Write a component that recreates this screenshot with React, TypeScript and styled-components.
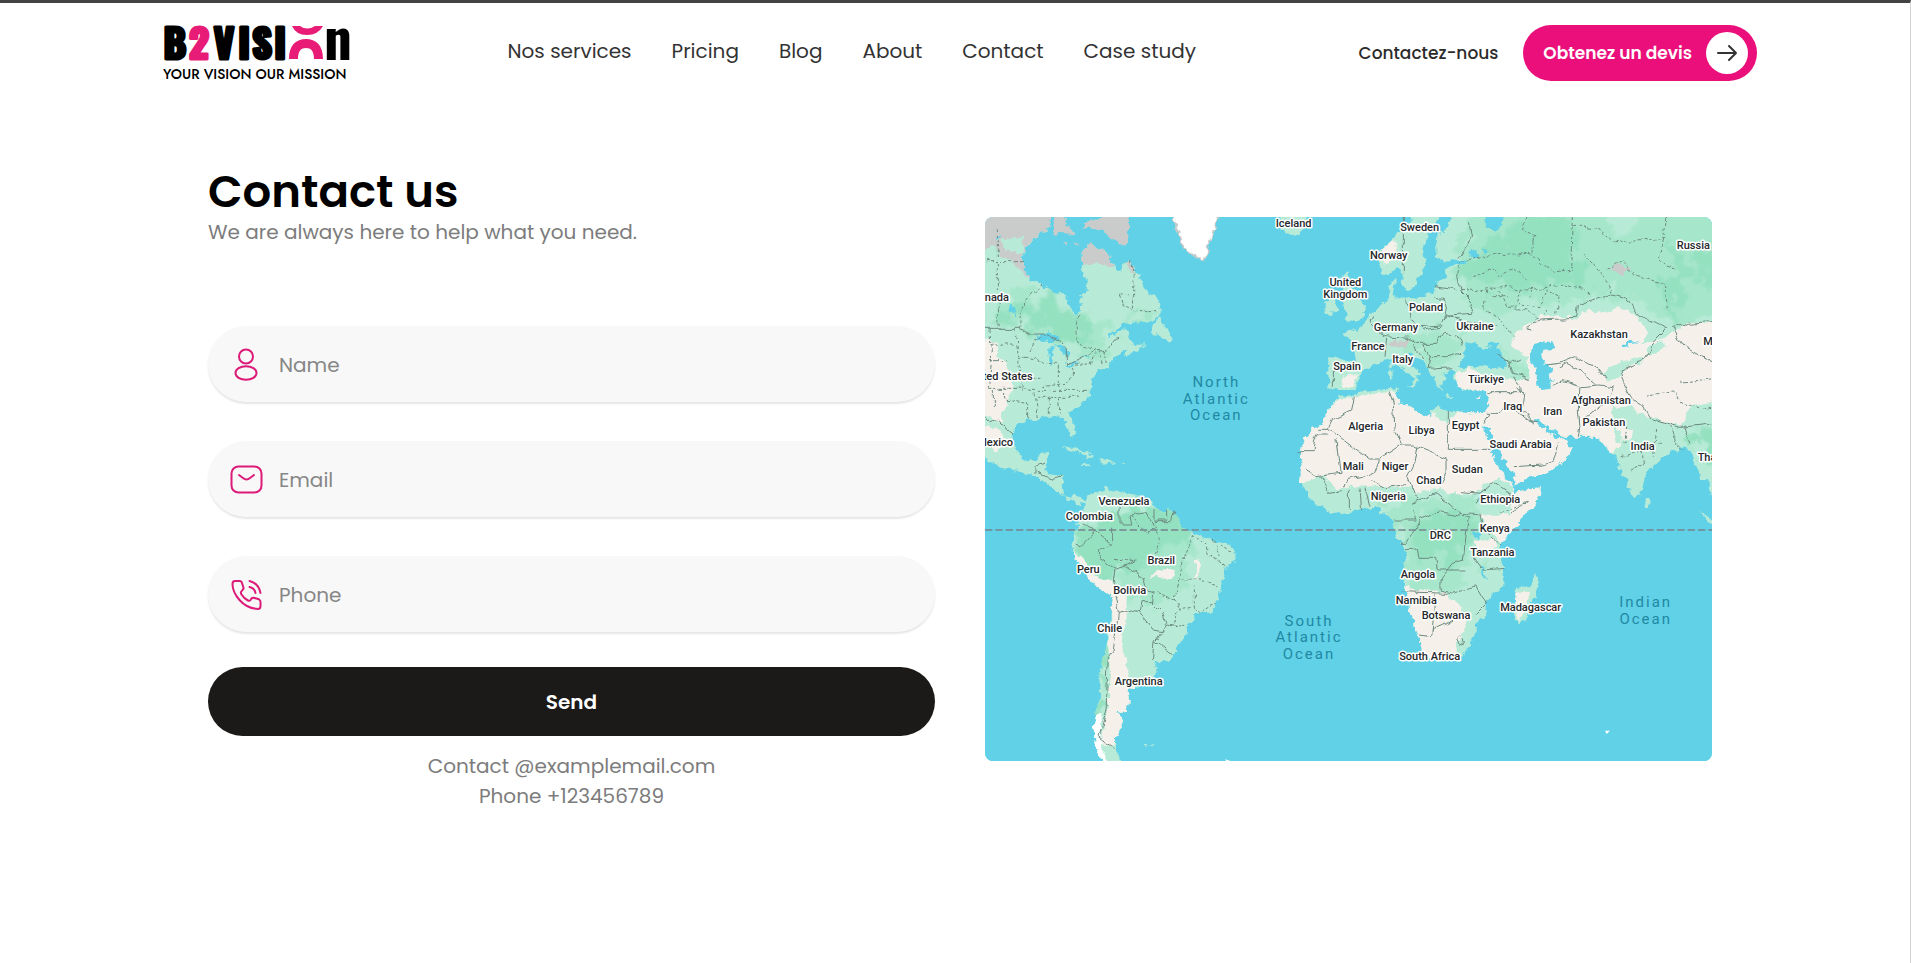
import React from "react";
import styled, { createGlobalStyle } from "styled-components";

const PINK = "#ea0f7b";

const GlobalStyle = createGlobalStyle`
  *, *::before, *::after { box-sizing: border-box; }
  body {
    margin: 0;
    background: #fff;
    color: #333;
    font-family: Poppins, Inter, "Liberation Sans", sans-serif;
  }
`;

const Page = styled.div`
  min-height: 100vh;
  border-top: 3px solid #434343;
  border-right: 1px solid #d4d4d4;
  padding-left: 10px;
`;

const Header = styled.header`
  display: flex;
  align-items: center;
  justify-content: space-between;
  gap: 24px;
  max-width: 1594px;
  margin: 0 auto;
  padding: 22px 0;
`;

const LogoLink = styled.a`
  display: block;
  flex: none;
  height: 56px;
`;

const Nav = styled.nav`
  display: flex;
  gap: 40px;
  margin-right: 6px;
`;

const NavLink = styled.a`
  color: #333;
  font-size: 20px;
  line-height: 30px;
  text-decoration: none;
  white-space: nowrap;
  padding-bottom: 4px;
`;

const Actions = styled.div`
  display: flex;
  align-items: center;
  gap: 25px;
`;

const ContactLink = styled.a`
  color: #2b2b2b;
  font-size: 17px;
  font-weight: 500;
  text-decoration: none;
  white-space: nowrap;
`;

const QuoteButton = styled.button`
  display: flex;
  align-items: center;
  gap: 14px;
  height: 56px;
  padding: 0 9px 0 20px;
  border: 0;
  border-radius: 28px;
  background: ${PINK};
  color: #fff;
  font-family: inherit;
  font-size: 17px;
  font-weight: 600;
  white-space: nowrap;
  cursor: pointer;
`;

const ArrowDisc = styled.span`
  display: grid;
  place-items: center;
  width: 42px;
  height: 42px;
  border-radius: 50%;
  background: #fff;
`;

const Main = styled.main`
  display: grid;
  grid-template-columns: 1fr 1fr;
  align-items: center;
  gap: 50px;
  max-width: 1504px;
  margin: 0 auto;
  padding: 60px 0;
`;

const ContactPanel = styled.section`
  padding-bottom: 4px;
`;

const Title = styled.h1`
  margin: 0;
  color: #000;
  font-size: 45px;
  line-height: 58px;
  font-weight: 600;
`;

const Subtitle = styled.p`
  margin: 0 0 83px;
  color: #7c7c7c;
  font-size: 20px;
  line-height: 22px;
`;

const Form = styled.form`
  display: flex;
  flex-direction: column;
  gap: 39px;
`;

const Field = styled.label`
  display: flex;
  align-items: center;
  gap: 15px;
  height: 76px;
  padding: 2px 22px 0;
  border-radius: 38px;
  background: #f8f8f8;
  box-shadow: 0 2px 2px rgba(0, 0, 0, 0.1);
`;

const Input = styled.input`
  flex: 1;
  min-width: 0;
  padding: 0;
  border: 0;
  outline: 0;
  background: none;
  color: #333;
  font-family: inherit;
  font-size: 20px;
  line-height: 30px;
  &::placeholder { color: #868686; opacity: 1; }
`;

const SendButton = styled.button`
  height: 69px;
  margin-top: -4px;
  border: 0;
  border-radius: 35px;
  background: #1b1a18;
  color: #fff;
  font-family: inherit;
  font-size: 20px;
  font-weight: 600;
  cursor: pointer;
`;

const Details = styled.address`
  margin-top: 15px;
  color: #7c7c7c;
  font-size: 20px;
  line-height: 30px;
  font-style: normal;
  text-align: center;
`;

const MapFrame = styled.svg`
  display: block;
  width: 100%;
  height: auto;
  border-radius: 8px;
  background: #60d1e6;
`;

const CountryLabel = styled.text`
  font-family: Roboto, "Liberation Sans", sans-serif;
  font-size: 33px;
  font-weight: 500;
  fill: #25282b;
  stroke: #fff;
  stroke-width: 9px;
  stroke-linejoin: round;
  paint-order: stroke;
`;

const OceanLabel = styled.text`
  font-family: Roboto, "Liberation Sans", sans-serif;
  font-size: 45px;
  letter-spacing: 6px;
  fill: #2289a5;
`;

const LogoLetters = styled.text`
  font-family: Oswald, "Liberation Sans", sans-serif;
  font-weight: 700;
  text-anchor: middle;
  stroke-linejoin: round;
`;

const LogoTagline = styled.text`
  font-family: Jost, Lato, sans-serif;
  font-size: 14px;
  font-weight: 500;
`;

function Logo() {
  return (
    <svg width="188" height="56" viewBox="0 0 188 56" role="img" aria-label="B2Vision">
      <LogoLetters fontSize="39" y="34" stroke="#000" strokeWidth="3">
        <tspan x="12">B</tspan>
        <tspan x="36" fill="#e81c76" stroke="#e81c76">2</tspan>
        <tspan x="61">V</tspan>
        <tspan x="81">I</tspan>
        <tspan x="99">S</tspan>
        <tspan x="117">I</tspan>
      </LogoLetters>
      <path d="M129 1H137Q144 6 152 1H160Q155 10 144 10T129 1Z" fill="#e81c76" />
      <path d="M126 34C126 20 133 14 143 14S160 20 160 34H151C151 26 148 23 143 23S135 26 135 34Z" fill="#e81c76" />
      <LogoLetters fontSize="55" x="175" y="35">n</LogoLetters>
      <LogoTagline x="0" y="54">YOUR VISION OUR MISSION</LogoTagline>
    </svg>
  );
}

function ArrowIcon() {
  return (
    <svg width="22" height="18" viewBox="0 0 22 18" fill="none" stroke="#333" strokeWidth="2" strokeLinecap="round" strokeLinejoin="round">
      <path d="M2 9H20M13 2L20 9L13 16" />
    </svg>
  );
}

const iconProps = {
  width: 34,
  height: 34,
  viewBox: "0 0 34 34",
  fill: "none",
  stroke: "#dc1a78",
  strokeWidth: 2,
  strokeLinecap: "round" as const,
  strokeLinejoin: "round" as const,
};

const UserIcon = () => (
  <svg {...iconProps}>
    <circle cx="16" cy="8.500" r="7" />
    <ellipse cx="16" cy="25" rx="10.500" ry="6.800" />
  </svg>
);

const MailIcon = () => (
  <svg {...iconProps}>
    <rect x="1.500" y="3.500" width="30" height="26" rx="7" />
    <path d="M9 12L13 15Q16.500 18 20 15L24 12" />
  </svg>
);

const PhoneIcon = () => (
  <svg {...iconProps}>
    <path d="M5 3H9.500Q11.500 3 12 5L13.300 9Q14 11 12.500 12L11 14Q10.500 15 11.500 16.500Q14 20.500 18 22.500Q19.500 23.300 20.500 22L21.500 20.500Q22.500 19.500 24.500 20L29 21.300Q30.500 22 30.500 24V28Q30.500 31 28 31Q17 30.500 9.500 22Q2.500 14 2.500 6Q2.500 3 5 3Z" />
    <path d="M19.500 3Q28.500 5 30.500 15M19.500 9Q24.500 10 25.500 15" />
  </svg>
);

const MAINLAND =
  "M-30 -30H212L210 55L190 62L160 85L135 120L128 150L130 180L150 205L185 222L215 245L258 252L262 285L285 310L293 325L300 300L298 262L320 245L322 215L303 185L310 165L308 130L320 105L345 105L375 125L395 140L398 170L410 175L425 188L435 160L450 148L462 175L478 195L490 225L500 240L530 265L542 285V310L525 325L495 335L440 340L410 355L385 380L400 375L430 358L450 360L448 385L465 405L440 420L415 432L400 445L385 470L350 480L335 515L328 540L330 558L310 575L285 595L270 610L272 625L285 655L284 672L275 682L262 650L250 622L225 618L190 622L150 630L115 640L103 650L98 680L105 715L120 735L140 755L168 750L178 730L210 725L205 745L195 775L205 790L248 798L245 825L250 862L280 855L300 860L310 872L320 860L340 845L365 850L375 828L390 840L440 850L480 855L525 885L530 900H570L590 915L605 955L640 970L690 988L740 1000L768 1022L765 1050L740 1075L728 1110L718 1150L710 1190L690 1210L650 1215L625 1240L620 1270L600 1300L580 1330L570 1352L545 1358L520 1350L530 1380L525 1400L480 1420L470 1438L445 1435L450 1470L440 1500L415 1510L435 1535L420 1555L405 1600L408 1625L425 1653L440 1690H385L385 1653L360 1645L345 1610L340 1550L350 1510L360 1460L358 1400L375 1330L390 1250L395 1160L350 1130L325 1100L290 1045L275 1010L285 960L305 920L318 885L285 876L255 862L235 848L215 830L195 815L160 795L125 785L80 775L50 765L15 745L-30 730Z";

const OLD_WORLD =
  "M1410 -30V21L1405 45L1380 70L1368 100L1370 140L1390 155L1435 150L1465 152L1450 165L1410 165L1390 180L1405 200L1370 215L1360 250L1320 262L1280 266L1250 264L1238 255L1245 210L1230 225L1228 255L1225 270L1205 285L1190 295L1180 315L1165 325L1145 350L1120 360L1092 368L1100 382L1120 400L1125 440L1130 455L1080 447L1045 445V530L1065 540L1120 540L1135 512L1140 490L1175 465L1210 455L1235 450L1250 468L1285 490L1302 505L1295 525L1280 532L1302 534L1315 512L1308 500L1325 495L1295 465L1280 440L1285 425L1305 440L1325 455L1345 475L1348 495L1365 500L1370 525L1385 540L1385 520L1400 515L1390 490L1415 480L1425 485L1420 500L1430 530L1460 540L1490 545L1520 540L1525 550L1520 590L1510 610L1450 605H1405L1380 590L1355 600L1350 618L1320 610L1285 585L1255 580L1250 545L1255 535L1180 540L1140 545L1110 560L1080 556L1065 575L1040 605L1030 640L1000 655L975 690L958 725L965 760L960 815L990 860L1010 885L1060 912L1110 905L1160 892L1200 890L1205 912L1230 915L1242 945L1255 990L1270 1015L1280 1045L1272 1080L1268 1120L1285 1180L1300 1230L1315 1280L1330 1320L1345 1345H1440L1470 1305L1485 1270L1490 1240L1515 1225L1518 1175L1530 1160L1570 1130L1572 1070L1560 1045V1020L1565 1000L1595 960L1625 930L1660 890L1680 855L1686 835L1650 838L1605 845L1598 825L1655 800L1710 782L1735 765L1765 735L1775 710L1760 690L1735 680L1725 685L1705 665L1680 650L1660 625L1675 625L1700 650L1730 665L1745 680L1850 680L1870 700L1885 725L1910 740L1925 790L1940 810L1950 840L1965 870L1985 845L1992 820L1995 790L2020 775L2050 740L2080 720L2120 715L2140 740L2150 780L2165 810H2185L2196 855L2240 870V-30Z";

const SCANDINAVIA =
  "M1300 -30V21L1275 50L1230 95L1195 125L1198 165L1208 190L1230 192L1250 175L1265 180V215L1280 245L1300 235L1315 210L1320 190L1338 165L1330 145L1325 115L1345 75L1365 45L1380 21V-30Z";

const ISLANDS = [
  "M535 320L560 350L575 385L560 390L540 378L510 375L520 350Z",
  "M450 405L495 400L490 412L440 440L435 432Z",
  "M245 712L275 710L310 725L345 738L325 742L295 728L260 718Z",
  "M358 745L400 752L405 760L380 763L360 757Z",
  "M308 762L325 763V768H310ZM420 759H434V763H420Z",
  "M895 -30H985V21L990 45L960 72L930 75L905 62Z",
  "M1035 275L1070 270L1072 300L1050 315L1032 315Z",
  "M1085 200L1105 185L1110 215L1125 240L1150 275L1155 300L1150 325L1110 335L1088 330L1105 310L1090 290L1095 250L1080 225Z",
  "M1228 480L1238 478V505L1230 508ZM1230 458H1238V474H1232Z",
  "M1400 558L1420 560V564H1400ZM1488 562L1505 558L1498 567Z",
  "M1995 860L2012 880L2005 898L1992 890Z",
  "M2155 900L2196 925L2240 950L2196 942L2180 930Z",
  "M1610 1140L1650 1125L1668 1090L1677 1115L1665 1160L1635 1235L1615 1240L1605 1220Z",
  "M492 1605H502V1610H494ZM508 1604H522V1608H510Z",
];

const MID_GREEN = [
  "M60 230L200 250L262 300L330 330L420 350L470 300L520 310L480 335L400 360L360 450L280 420L180 380L60 350Z",
  "M1480 -30H1860L1900 80L1960 60L2030 -30H2240V330L2080 350L1990 290L1930 240L1830 270L1720 300L1640 260L1560 330L1480 280L1420 220L1440 120Z",
  "M1260 385L1330 370L1450 380L1430 470L1340 470Z",
  "M1550 420L1640 450L1650 510L1600 500Z",
  "M1220 890L1500 850L1490 1060L1400 1150L1280 1100Z",
  "M500 900L620 940L640 1080L560 1180L450 1180L400 1120Z",
];

const DARK_GREEN = [
  "M60 290L125 280L190 265L250 310L300 325L350 400L300 405L250 380L200 350L125 345L70 310Z",
  "M280 970L400 910L410 890L590 905L625 960L600 1010L500 1050L470 1070L400 1080L380 1115L330 1080L290 1020Z",
  "M1550 50L1640 25H1780L1800 180L1820 220L1720 225L1640 240L1560 230L1500 235L1440 200L1445 160L1520 130Z",
  "M2060 60L2100 120L2130 200L2100 300L2070 320L2050 250L2075 150Z",
  "M2140 130H2240V240L2150 220Z",
  "M1320 920L1380 910L1465 920L1470 960L1450 1060L1380 1050L1300 1010L1280 970Z",
  "M2150 650L2240 640V760L2160 750Z",
  "M350 1330L375 1310L380 1420L372 1520L345 1510L362 1400Z",
];

const BEIGE = [
  "M940 830L1030 795L1075 840L1100 830L1290 830L1320 850L1380 830L1400 850L1490 850L1520 820L1560 800L1600 835L1590 910L1500 915L1510 935L1560 1000L1640 990L1800 700L1890 740L1930 690L1890 600L1950 590L2000 620L2100 650L2130 590L2240 570V335L2120 340L2060 380L1990 400L2000 360L1960 310L1920 290L1870 310L1810 300L1790 325L1680 315L1640 345L1610 370L1590 400L1640 440L1650 510L1610 515L1520 500L1470 475L1430 490L1425 530L1500 545L1400 640L1250 545L1160 552L1080 572L900 600Z",
  "M1200 1125L1290 1135L1400 1150L1440 1190L1460 1230L1450 1270L1430 1300V1380H1200Z",
  "M1480 990L1540 985L1550 1010L1500 1030Z",
  "M265 1005L320 1060L345 1100L395 1115L440 1150V1230L425 1280L435 1350L450 1400L475 1430L445 1510L430 1550L400 1610L365 1600L380 1500L390 1390L385 1310L395 1210L385 1170L320 1125Z",
  "M-30 390H15L55 400L50 440L80 455L100 540L75 590L60 640L15 615H-30Z",
  "M-30 645H15L60 660L80 690L50 725L15 700H-30Z",
  "M1085 500L1130 495L1120 525L1085 530Z",
  "M1605 1150L1650 1140L1640 1190L1615 1235Z",
  "M1900 640L1960 660L1950 690L1910 700Z",
  "M648 1045H662L655 1110H648ZM505 1100L550 1075L585 1080L580 1105Z",
  "M1200 120L1240 90L1250 120L1220 165Z",
];

const LATE_GREEN = [
  "M1870 490L1910 460L1990 440L1995 455L1940 470L1920 500L1880 515Z",
  "M2000 420L2040 390L2060 410L2010 440Z",
  "M1480 850L1520 830L1560 800L1590 850L1600 870L1560 915L1500 912Z",
  "M1900 590L1940 600L2010 635L2110 650L2080 670L2000 660L1910 620Z",
];

const GREY_LAND = [
  "M-30 -30H212V55L160 85L130 125L128 165L150 205L140 205L110 165L60 140L50 110L-30 125Z",
  "M308 100L345 105L375 125L398 140V175L350 160L308 165Z",
  "M435 145H465L462 185L445 180Z",
  "M1895 165L1930 160L1950 175L1925 195L1900 185Z",
  "M1225 395L1290 395L1280 415L1240 410Z",
];

const ARCTIC_ISLANDS = [
  "M310 40L350 30L385 21V-30H447V100L430 108L400 90L375 65L345 55L315 50Z",
  "M220 45L240 -30L258 40L280 70L265 78L240 65L225 75Z",
  "M245 98L262 95L260 104ZM280 100L292 96V105Z",
];

const WATER = [
  "M160 395L195 365L225 370L240 385L215 400L190 392Z",
  "M205 415L222 410L215 440V465L205 455Z",
  "M225 405L255 410L268 430L262 442L245 425Z",
  "M255 465L295 450L290 458L265 470Z",
  "M300 443L325 435L322 442Z",
  "M85 275L105 295L110 318L92 300ZM52 85L64 72L60 92Z",
  "M1460 395L1490 400L1510 420L1545 405L1560 420L1580 455V475L1520 470L1480 470L1445 475L1438 455L1450 430Z",
  "M1520 405L1555 390L1545 410Z",
  "M1675 395L1720 400L1725 415L1690 420L1685 440L1700 465L1720 480L1708 490L1715 515V535L1690 540L1665 520L1670 480L1650 455V420Z",
  "M1925 410L1945 395L1980 398L1950 402L1930 415Z",
  "M1505 645L1525 655L1550 700L1570 745L1597 785L1608 820V850L1595 820L1575 800L1545 760L1535 715L1520 680Z",
  "M1510 -30L1570 25L1565 50L1540 65L1515 45Z",
  "M1465 125L1485 118L1495 140L1475 145ZM1508 115L1520 120L1515 135Z",
  "M1250 185L1262 180L1260 195ZM1480 970L1500 965L1498 985L1482 985Z",
  "M1505 1065L1512 1070L1518 1110L1508 1100Z",
];

const SOLID_BORDERS = [
  "M15 358H122L150 372H200L240 395L262 420V465L295 450L345 422H378L405 385L415 382",
  "M15 615L30 635L50 628L70 650L100 672",
  "M165 795V770L195 760M170 790L215 805L245 798",
  "M305 945L340 960L390 1000M290 1005L300 1010L345 965M420 890V945L455 945L450 915L500 905L520 945M525 900V930H560V900M585 905L575 935L515 935M395 950V1000L360 1020L355 1045L405 1075L440 1065L465 1050",
  "M405 1075L400 1110L410 1160M440 1070L490 1105L500 1140L525 1145L520 1180L550 1210L560 1235L545 1265L520 1260L475 1205L480 1175H520",
  "M405 1155L415 1210L455 1200L475 1205M415 1210L400 1320L385 1340L378 1500L358 1580L405 1615M560 1245L525 1295L520 1350M525 1295L575 1335M560 1245L590 1250",
  "M1045 655L1110 705L1175 750H1195L1265 705L1245 655L1240 580L1228 545M1120 560L1112 600L1060 625L1045 655L1015 655M958 725H1000V705L1012 672H1045M1068 690L1080 790L1010 800L975 780",
  "M1405 605V718H1525M1265 705L1300 705L1398 745V790L1380 825M1310 710L1300 770L1285 800L1300 840L1310 870M1195 752L1180 790L1100 810L1090 835",
  "M1180 815L1210 830L1285 820M1025 800L1045 850L1085 845M1108 840V900M1140 835L1145 900M1155 830L1170 890",
  "M1300 880L1370 850L1440 910L1505 915M1300 900L1310 930H1245M1320 925L1380 905L1465 920L1450 1050L1420 1060L1380 1110V1140L1420 1150L1490 1130L1520 1180L1490 1210",
  "M1275 1022L1315 1020L1320 1045H1370L1375 1080H1450M1320 930L1280 1000H1260M1480 1040L1510 1080L1570 1075M1270 1145L1400 1150M1362 1150V1200L1355 1280L1320 1275M1355 1260L1400 1240L1440 1220M1430 1290L1440 1280L1450 1295L1438 1303Z",
  "M1500 915L1510 960L1560 1005M1590 915L1640 880M1440 845L1500 850L1540 815L1590 850L1600 870M1500 850L1495 880",
  "M1520 610L1560 610L1580 580L1645 630L1670 635M1525 545H1620V530L1600 500M1635 555L1625 600L1665 640M1600 770L1690 765L1720 755L1735 700M1610 530L1635 560M1530 610L1515 635",
  "M1715 530L1750 515L1800 530L1795 600L1800 650L1795 680M1800 530L1860 525L1900 530L1880 580L1850 600L1820 620M1735 475L1760 460L1800 480L1850 525M1700 465L1740 460L1790 440L1860 480L1880 510",
  "M1650 365L1640 350L1680 330L1790 325L1795 285L1890 250L1940 265L1970 310L2010 330L2060 355L2030 385L2010 420L1995 450L1920 480L1930 520L1960 570L1990 590L2010 625L2100 655L2196 645",
  "M2075 355L2120 340L2196 335M2075 355L2110 410L2150 430L2196 455M2075 650L2090 700L2110 720M2110 650L2130 700",
  "M1465 40L1475 80L1440 145M1435 165L1430 200L1440 240L1480 280L1475 310L1400 315M1365 230L1430 240M1360 262L1390 265L1400 310L1385 345L1320 350M1280 266L1290 325L1330 360L1390 350M1180 315L1170 330L1210 380L1285 385M1220 385L1215 440M1285 385L1310 400H1370L1390 370L1430 375L1450 410M1330 400L1350 440L1400 440L1440 430M1350 440L1345 475L1420 470M1300 405L1330 450M1060 460V530",
  "M1270 21V190M1550 430L1590 460L1620 450M1590 460L1600 490L1650 505M1400 315L1450 335L1550 345",
];

const DASHED_BORDERS = [
  "M15 155H130M52 55V235L58 358M122 358L125 290L185 222M293 320L290 400L345 420M450 150L462 200L460 300M460 305H530M460 300L430 285L418 250L450 255",
  "M30 360L35 450L25 535M30 405H108M30 452H80M105 360L115 435L120 500L130 545M115 442H165L175 460H235L235 530M25 535H130L150 541H325M130 505H190M70 545L75 570L140 580M40 540V600M140 580V625M165 550L175 620M205 560V620M235 565L240 612M175 562H300M280 470V495L255 520L190 530M285 465H330L345 430M355 425L365 470M375 420V460M150 420L165 390L190 380",
  "M405 1045L440 1052L470 1050M525 950L540 1000L510 1060M640 975L605 1060L600 1110L660 1110L715 1125M640 975L680 1000V1030L740 1070M700 990L715 1040M600 1110L580 1170L530 1150M580 1170L600 1200L640 1190L640 1130M595 1205L580 1240M640 1195L660 1210L710 1180M565 1250L625 1245M455 915L500 970L530 950M720 1000L750 1020",
  "M1640 21L1630 60L1665 80L1655 130L1520 135L1440 160M1780 21L1775 180L1720 190L1655 130M1780 45L1860 60L1900 95L2050 90L2060 21M1810 130L1880 210L1895 250M1880 180L1930 150L1970 200L2050 220L2060 300M2050 90L2040 150L2080 180M1440 235L1500 240L1560 230L1640 240L1750 225L1810 235L1830 260",
  "M1520 240L1510 300L1560 330L1600 380M1560 240L1580 290L1640 300L1670 330M1620 240L1610 280L1680 290L1700 240L1740 260L1730 310M1480 200L1530 180L1560 200L1600 180L1640 210M1540 260L1590 260M1650 260L1660 220M1700 300L1690 320",
  "M2000 555L2090 545L2100 580L2196 600M2100 520L2196 510M1960 700L2040 700M1925 740L1990 720M1950 780L1990 760L1985 700M2030 660L2020 740M1940 650L1935 700M1560 910L1640 880",
];

type Label = [string, number, number, ("start" | "end")?];

const COUNTRIES: Label[] = [
  ["Iceland", 941, 51], ["Canada", 87, 272, "end"], ["United States", 158, 509, "end"], ["Mexico", 99, 709, "end"],
  ["Sweden", 1319, 64], ["Norway", 1226, 146], ["United", 1096, 229], ["Kingdom", 1096, 263],
  ["Poland", 1338, 304], ["Germany", 1248, 362], ["Ukraine", 1485, 359], ["France", 1164, 419],
  ["Italy", 1268, 459], ["Spain", 1101, 481], ["Türkiye", 1518, 519], ["Kazakhstan", 1857, 383],
  ["Russia", 2140, 118], ["Mongolia", 2170, 404, "start"], ["Iraq", 1598, 599], ["Iran", 1718, 615],
  ["Afghanistan", 1863, 582], ["Pakistan", 1872, 649], ["India", 1988, 720], ["Thailand", 2153, 753, "start"],
  ["Saudi Arabia", 1622, 713], ["Egypt", 1457, 656], ["Libya", 1325, 671], ["Algeria", 1157, 659],
  ["Mali", 1120, 779], ["Niger", 1245, 779], ["Chad", 1347, 822], ["Sudan", 1462, 788],
  ["Venezuela", 432, 884], ["Colombia", 328, 930], ["Brazil", 544, 1063], ["Peru", 325, 1089],
  ["Bolivia", 449, 1151], ["Chile", 389, 1267], ["Argentina", 476, 1424], ["Nigeria", 1225, 869],
  ["Ethiopia", 1561, 880], ["Kenya", 1544, 966], ["DRC", 1381, 988], ["Tanzania", 1537, 1039],
  ["Angola", 1314, 1104], ["Namibia", 1309, 1181], ["Botswana", 1398, 1226], ["Madagascar", 1652, 1204],
  ["South Africa", 1349, 1350],
];

const OCEANS: Label[] = [
  ["North", 709, 532], ["Atlantic", 709, 581], ["Ocean", 709, 629],
  ["South", 987, 1247], ["Atlantic", 987, 1297], ["Ocean", 987, 1346],
  ["Indian", 1997, 1192], ["Ocean", 1997, 1242],
];

const LAND = [MAINLAND, OLD_WORLD, SCANDINAVIA, ...ISLANDS].join("");

function WorldMap() {
  return (
    <MapFrame viewBox="15 21 2181 1632" role="img" aria-label="World map">
      <defs>
        <clipPath id="land"><path d={LAND} /></clipPath>
        <filter id="coast" x="0" y="0" width="100%" height="100%">
          <feTurbulence type="fractalNoise" baseFrequency="0.05" numOctaves="3" seed="4" />
          <feDisplacementMap in="SourceGraphic" scale="24" xChannelSelector="R" yChannelSelector="G" />
        </filter>
        <filter id="frontier" x="0" y="0" width="100%" height="100%">
          <feTurbulence type="fractalNoise" baseFrequency="0.03" numOctaves="2" seed="4" />
          <feDisplacementMap in="SourceGraphic" scale="22" xChannelSelector="R" yChannelSelector="G" />
        </filter>
        <filter id="forest" x="-10%" y="-10%" width="120%" height="120%">
          <feTurbulence type="fractalNoise" baseFrequency="0.02" numOctaves="4" seed="9" />
          <feDisplacementMap in="SourceGraphic" scale="130" xChannelSelector="R" yChannelSelector="G" />
          <feGaussianBlur stdDeviation="3" />
        </filter>
      </defs>
      <g filter="url(#coast)">
        <rect x="-40" y="-40" width="2300" height="1760" fill="#60d1e6" />
        <g clipPath="url(#land)">
          <rect x="-40" y="-40" width="2300" height="1760" fill="#b8ebd7" />
          <path d={MID_GREEN.join("")} fill="#a6e6cb" filter="url(#forest)" />
          <path d={DARK_GREEN.join("")} fill="#94e1c0" filter="url(#forest)" />
          <path d={BEIGE.join("")} fill="#f5f0e9" />
          <path d={LATE_GREEN.join("")} fill="#b8ebd7" />
          <path d={GREY_LAND.join("")} fill="#cacccb" />
          <path d="M65 90L135 80L128 130L75 120Z" fill="#b8ebd7" />
          <path d="M335 1520L365 1510L362 1570L385 1690H340Z" fill="#fff" />
        </g>
        <path d={ARCTIC_ISLANDS.join("")} fill="#cacccb" />
        <path d="M580 -30V21L590 50L605 95L625 130L655 145L675 155L682 130L690 90L705 60L715 21V-30Z" fill="#fff" stroke="#cacccb" strokeWidth="5" />
        <path d={WATER.join("")} fill="#60d1e6" />
      </g>
      <g filter="url(#frontier)" fill="none" stroke="#6c8a81">
        <path d={SOLID_BORDERS.join("")} strokeWidth="3" />
        <path d={DASHED_BORDERS.join("")} strokeWidth="3" strokeDasharray="9 6" />
      </g>
      <path d="M1875 1562H1890L1880 1572ZM735 1648L752 1653H738Z" fill="#fff" />
      <path d="M15 960H2196" stroke="#77848f" strokeWidth="5" strokeDasharray="22 9" />
      {COUNTRIES.map(([name, x, y, anchor]) => (
        <CountryLabel key={name} x={x} y={y} textAnchor={anchor ?? "middle"}>{name}</CountryLabel>
      ))}
      {OCEANS.map(([name, x, y]) => (
        <OceanLabel key={`${name}${x}`} x={x} y={y} textAnchor="middle">{name}</OceanLabel>
      ))}
    </MapFrame>
  );
}

const NAV_ITEMS = ["Nos services", "Pricing", "Blog", "About", "Contact", "Case study"];

const FIELDS = [
  { name: "Name", type: "text", Icon: UserIcon },
  { name: "Email", type: "email", Icon: MailIcon },
  { name: "Phone", type: "tel", Icon: PhoneIcon },
];

export default function App() {
  return (
    <Page>
      <GlobalStyle />
      <Header>
        <LogoLink href="#home"><Logo /></LogoLink>
        <Nav>
          {NAV_ITEMS.map((item) => (
            <NavLink key={item} href="#">{item}</NavLink>
          ))}
        </Nav>
        <Actions>
          <ContactLink href="#contact">Contactez-nous</ContactLink>
          <QuoteButton type="button">
            Obtenez un devis
            <ArrowDisc><ArrowIcon /></ArrowDisc>
          </QuoteButton>
        </Actions>
      </Header>
      <Main>
        <ContactPanel>
          <Title>Contact us</Title>
          <Subtitle>We are always here to help what you need.</Subtitle>
          <Form onSubmit={(e) => e.preventDefault()}>
            {FIELDS.map(({ name, type, Icon }) => (
              <Field key={name}>
                <Icon />
                <Input type={type} placeholder={name} aria-label={name} />
              </Field>
            ))}
            <SendButton type="submit">Send</SendButton>
          </Form>
          <Details>
            <div>Contact @examplemail.com</div>
            <div>Phone +123456789</div>
          </Details>
        </ContactPanel>
        <WorldMap />
      </Main>
    </Page>
  );
}
